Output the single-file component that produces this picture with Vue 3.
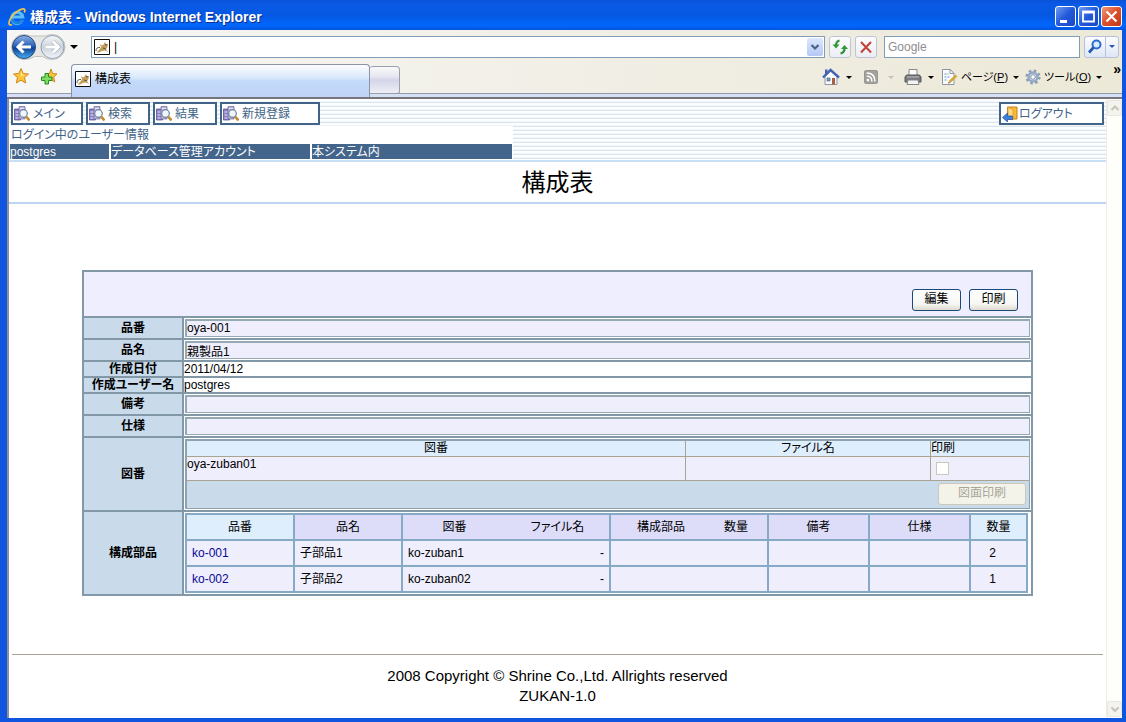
<script setup>
import { ref } from 'vue'

const navItems = [
  { label: 'メイン', size: 'w-main' },
  { label: '検索', size: 'w-short' },
  { label: '結果', size: 'w-short' },
  { label: '新規登録', size: 'w-long' }
]

const address = ref('|')
const query = ref('')

const parts = [
  { no: 'ko-001', name: '子部品1', drawing: 'ko-zuban1', file: '-', qty: 2 },
  { no: 'ko-002', name: '子部品2', drawing: 'ko-zuban02', file: '-', qty: 1 }
]
</script>

<template>
  <div class="window">
    <header class="titlebar">
      <svg class="ie" viewBox="0 0 18 18" width="18" height="18" aria-hidden="true">
        <path d="M14.4 12.200A5.600 5.600 0 1 1 14.800 9H5" fill="none" stroke="#5cc0f8" stroke-width="3" />
        <path d="M14.400 12.200A5.600 5.600 0 0 1 4.200 10.800" fill="none" stroke="#1c82dc" stroke-width="2.600" />
        <path d="M4 16.6C.8 18 .1 15.200 2.200 11.200 5 5.800 11 1.300 15 .9c2.400-.1 2.200 1.800 1.200 3.600" fill="none" stroke="#f1c24a" stroke-width="1.700" />
      </svg>
      <h1>構成表 - Windows Internet Explorer</h1>
      <div class="controls">
        <button class="ctl" type="button" aria-label="最小化">
          <svg viewBox="0 0 20 20" width="20" height="20"><path d="M4 13h7v3H4z" fill="#fff" /></svg>
        </button>
        <button class="ctl" type="button" aria-label="最大化">
          <svg viewBox="0 0 20 20" width="20" height="20"><path d="M4 4.500h11v10H4zM4 5.500h11" fill="none" stroke="#fff" stroke-width="1.800" /></svg>
        </button>
        <button class="ctl close" type="button" aria-label="閉じる">
          <svg viewBox="0 0 20 20" width="20" height="20"><path d="M4.500 4.500l10 10M14.500 4.500l-10 10" stroke="#fff" stroke-width="2.200" /></svg>
        </button>
      </div>
    </header>

    <div class="frame">
      <div class="toolbar">
        <div class="row address-row">
          <svg class="travel" viewBox="0 0 60 28" width="60" height="28" aria-hidden="true">
            <defs>
              <linearGradient id="backFill" x1="0" y1="0" x2="0" y2="1">
                <stop offset="0" stop-color="#8fb4e4" /><stop offset=".45" stop-color="#2b62b8" />
                <stop offset=".55" stop-color="#0e3f96" /><stop offset="1" stop-color="#49b0ee" />
              </linearGradient>
              <linearGradient id="fwdFill" x1="0" y1="0" x2="0" y2="1">
                <stop offset="0" stop-color="#f6f7f9" /><stop offset=".5" stop-color="#ccd3dc" />
                <stop offset="1" stop-color="#f2f5f8" />
              </linearGradient>
            </defs>
            <path d="M14 1.500q3 0 6 1.500h16q3-1.500 6.500-1.500a12.500 12.500 0 0 1 0 25q-6 0-10-3h-8q-4 3-10.500 3a12.500 12.500 0 0 1 0-25z" fill="#e6e6e4" stroke="#c2c2be" />
            <circle cx="14" cy="14" r="11.500" fill="url(#backFill)" stroke="#274a86" />
            <circle cx="42.500" cy="14" r="11.500" fill="url(#fwdFill)" stroke="#8fa0b4" />
            <path d="M21 14H9M13.500 8.500L8 14l5.500 5.500" fill="none" stroke="#fff" stroke-width="3" />
            <path d="M35.500 14h12M43 8.500l5.500 5.500-5.500 5.500" fill="none" stroke="#aab4c0" stroke-width="4.200" />
            <path d="M35.500 14h12M43 8.500l5.500 5.500-5.500 5.500" fill="none" stroke="#fff" stroke-width="2.800" />
          </svg>
          <span class="tri history"></span>
          <div class="address">
            <svg class="page-icon" viewBox="0 0 16 16" width="16" height="16" aria-hidden="true">
              <path d="M.5.5h15v15H.5z" fill="#fff" stroke="#111" />
              <path d="M6 5l2 1.500 1.500-1L11 3l1 2h2l-.5 3-1.500 2 2 3-3-1.500-3 .5L5 13.500H2.500L5 11l2-2.500z" fill="#c3a05a" />
              <path d="M2 12q0-4 4-3.500M9 9l3 1M11 5.500l2 .5" fill="none" stroke="#5d5648" />
            </svg>
            <input v-model="address" type="text" aria-label="アドレス" />
            <button type="button" class="combo" aria-label="履歴">
              <svg viewBox="0 0 16 18" width="16" height="18"><path d="M4.500 7L8 10.500 11.500 7" fill="none" stroke="#4d6185" stroke-width="2.200" /></svg>
            </button>
          </div>
          <button class="tool-btn" type="button" aria-label="更新">
            <svg viewBox="0 0 20 20" width="20" height="20">
              <path d="M9.500 3.500Q6 4.500 6 8.500M10.500 16.500q4-1 4-5" fill="none" stroke="#2f8f36" stroke-width="2.200" />
              <path d="M2.500 7.500h7L6 11.500zM11 12h7l-3.500-4z" fill="#2f9a38" />
            </svg>
          </button>
          <button class="tool-btn" type="button" aria-label="中止">
            <svg viewBox="0 0 20 20" width="20" height="20"><path d="M5 5l10 10.500M15 5L5 15.500" stroke="#c4403a" stroke-width="2" /></svg>
          </button>
          <input v-model="query" class="search" type="text" placeholder="Google" aria-label="検索" />
          <div class="search-group">
            <button type="button" aria-label="検索する">
              <svg viewBox="0 0 20 20" width="20" height="20">
                <circle cx="11.500" cy="7.500" r="4" fill="#d9ecff" stroke="#2a6ad0" stroke-width="2" />
                <path d="M8.500 10.500L4 15.500" stroke="#2458b0" stroke-width="2.800" />
              </svg>
            </button>
            <button type="button" class="more" aria-label="検索オプション"><span class="tri blue"></span></button>
          </div>
        </div>

        <div class="row tab-row">
          <svg class="star" viewBox="0 0 18 18" width="18" height="18" aria-hidden="true">
            <path d="M9 1.500l2.200 5 5.300.5-4 3.600 1.200 5.400L9 13.200 4.300 16l1.200-5.400-4-3.600 5.300-.5z" fill="#fbc63c" stroke="#d1861c" stroke-linejoin="round" />
            <path d="M9 4l1.300 3.500 3 .4-4.300.9z" fill="#fff0a8" />
          </svg>
          <svg class="star-add" viewBox="0 0 18 18" width="18" height="18" aria-hidden="true">
            <path d="M11 1l1.600 4.600 4.400.4-3.300 3.100 1.100 4.900-3.800-2.400L7 14l1-5-3-3 4.400-.4z" fill="#fbc63c" stroke="#d1861c" stroke-linejoin="round" />
            <path d="M5 5.500h3.500V9H12v3.500H8.500V16H5v-3.500H1.500V9H5z" fill="#7fdc62" stroke="#248a22" />
          </svg>
          <div class="tab">
            <svg class="page-icon" viewBox="0 0 16 16" width="16" height="16" aria-hidden="true">
              <path d="M.5.5h15v15H.5z" fill="#fff" stroke="#111" />
              <path d="M6 5l2 1.500 1.500-1L11 3l1 2h2l-.5 3-1.500 2 2 3-3-1.500-3 .5L5 13.500H2.500L5 11l2-2.500z" fill="#c3a05a" />
              <path d="M2 12q0-4 4-3.500M9 9l3 1M11 5.500l2 .5" fill="none" stroke="#5d5648" />
            </svg>
            <span>構成表</span>
          </div>
          <button class="new-tab" type="button" aria-label="新しいタブ"></button>
          <div class="commands">
            <svg viewBox="0 0 18 18" width="18" height="18" aria-hidden="true">
              <path d="M3 1.500h2.500V6H3z" fill="#4a5fae" />
              <path d="M3 8.500L9 3l6 5.500V16.500H3z" fill="#fafafa" stroke="#8d93a8" />
              <path d="M1 9.500L8.500 2 17 9.500" fill="none" stroke="#4564b4" stroke-width="2.400" />
              <path d="M5 10h3v3H5z" fill="#6fa3dc" stroke="#456" stroke-width=".6" /><path d="M10 10h3v6.500h-3z" fill="#a5603f" />
            </svg>
            <span class="tri small home-arrow"></span>
            <svg class="feed" viewBox="0 0 16 16" width="14" height="14" aria-hidden="true">
              <rect x=".5" y=".5" width="15" height="15" rx="2" fill="#a3a19b" stroke="#8d8b86" />
              <circle cx="4.500" cy="11.500" r="1.500" fill="#fff" />
              <path d="M3 7q6 0 6 6M3 3.500q9.500 0 9.500 9.500" fill="none" stroke="#fff" stroke-width="1.700" />
            </svg>
            <span class="tri small pale"></span>
            <svg class="printer" viewBox="0 0 18 18" width="18" height="18" aria-hidden="true">
              <path d="M5 1.500h8v6H5z" fill="#fff" stroke="#888" />
              <path d="M2.500 7h13l1.500 2v5H1V9z" fill="#77797d" stroke="#55575b" />
              <path d="M3 9h12" stroke="#c4c7cc" /><path d="M4 12h10l1 4.500H3z" fill="#f4f4f4" stroke="#888" />
            </svg>
            <span class="tri small"></span>
            <svg class="page" viewBox="0 0 18 18" width="18" height="18" aria-hidden="true">
              <path d="M2.500 1.500h8l3.500 4v11H2.500z" fill="#fcfcfc" stroke="#8f959f" />
              <path d="M10 1.500v4h4" fill="none" stroke="#8f959f" />
              <path d="M4.500 6h4M4.500 9h5M4.500 12h3" stroke="#5f93d6" stroke-dasharray="2 1" />
              <path d="M16.500 7.500L9.500 14" stroke="#d9a431" stroke-width="2.400" /><path d="M8 15.500l2-.5-1.300-1.300z" fill="#444" />
            </svg>
            <span class="cmd">ページ(<u>P</u>)</span>
            <span class="tri small"></span>
            <svg class="gear" viewBox="0 0 18 18" width="16" height="16" aria-hidden="true">
              <circle cx="9" cy="9" r="7.200" fill="none" stroke="#8a9bb3" stroke-width="2.600" stroke-dasharray="2.827 2.827" />
              <circle cx="9" cy="9" r="5" fill="#dfe9f5" stroke="#93a8c4" stroke-width="2.800" />
              <circle cx="9" cy="9" r="2.600" fill="#fff" stroke="#73869f" />
            </svg>
            <span class="cmd">ツール(<u>O</u>)</span>
            <span class="tri small"></span>
            <span class="overflow">»</span>
          </div>
        </div>
      </div>

      <div class="viewport">
        <main class="page-body">
          <div class="banner">
            <nav class="menu">
              <button v-for="item in navItems" :key="item.label" type="button" class="menu-btn" :class="item.size">
                <svg viewBox="0 0 16 16" width="16" height="16" aria-hidden="true">
                  <path d="M.5 3h5l1 1v10h-6z" fill="#8a7fc4" stroke="#4b4586" stroke-width=".7" />
                  <path d="M5 .5h6V13H5z" fill="#b9b4e0" stroke="#6a6797" stroke-width=".7" />
                  <path d="M1.500 6h3M1.500 9h3M1.500 12h3M6 2.500h4" stroke="#e6e3fb" />
                  <circle cx="9.500" cy="7.500" r="3.800" fill="#eef6fd" stroke="#6e7f99" stroke-width="1.200" />
                  <path d="M12 10.500l3.500 4" stroke="#c28a2b" stroke-width="2.600" />
                </svg>
                <span>{{ item.label }}</span>
              </button>
              <button type="button" class="menu-btn logout">
                <svg viewBox="0 0 16 16" width="16" height="16" aria-hidden="true">
                  <path d="M5.500 1h9.500v12H5.500z" fill="#f9b93a" stroke="#c98315" />
                  <path d="M6 1.500l5 2V14l-5-2z" fill="#ffdc84" stroke="#d49228" stroke-width=".7" />
                  <path d="M.5 11.500l5-4.500v3h5v3.500h-5V16z" fill="#3f7fe0" stroke="#1f519f" stroke-width=".7" />
                </svg>
                <span>ログアウト</span>
              </button>
            </nav>
            <section class="login-info">
              <p>ログイン中のユーザー情報</p>
              <div class="login-cells">
                <span>postgres</span><span>データベース管理アカウント</span><span>本システム内</span>
              </div>
            </section>
          </div>

          <h2>構成表</h2>

          <table class="sheet">
            <colgroup><col class="label-col" /><col /></colgroup>
            <tbody>
              <tr>
                <td colspan="2" class="actions">
                  <div><button type="button" class="xp-btn">編集</button><button type="button" class="xp-btn">印刷</button></div>
                </td>
              </tr>
              <tr class="field"><th scope="row"><label for="no">品番</label></th><td><input id="no" value="oya-001" readonly /></td></tr>
              <tr class="field"><th scope="row"><label for="name">品名</label></th><td><input id="name" value="親製品1" readonly /></td></tr>
              <tr class="plain"><th scope="row">作成日付</th><td>2011/04/12</td></tr>
              <tr class="plain"><th scope="row">作成ユーザー名</th><td>postgres</td></tr>
              <tr class="field"><th scope="row"><label for="note">備考</label></th><td><input id="note" readonly /></td></tr>
              <tr class="field"><th scope="row"><label for="spec">仕様</label></th><td><input id="spec" readonly /></td></tr>
              <tr>
                <th scope="row">図番</th>
                <td class="holder">
                  <table class="drawings">
                    <colgroup><col /><col class="file-col" /><col class="print-col" /></colgroup>
                    <thead><tr><th scope="col">図番</th><th scope="col">ファイル名</th><th scope="col" class="left">印刷</th></tr></thead>
                    <tbody><tr><td>oya-zuban01</td><td></td><td class="check"><input type="checkbox" disabled aria-label="印刷" /></td></tr></tbody>
                    <tfoot><tr><td colspan="3"><button type="button" class="xp-btn wide" disabled>図面印刷</button></td></tr></tfoot>
                  </table>
                </td>
              </tr>
              <tr>
                <th scope="row">構成部品</th>
                <td class="holder">
                  <table class="parts">
                    <colgroup>
                      <col class="c-id" /><col class="c-id" /><col class="c-drawing" /><col class="c-part" />
                      <col class="c-note" /><col class="c-note" /><col class="c-qty" />
                    </colgroup>
                    <thead>
                      <tr>
                        <th scope="col" class="key">品番</th>
                        <th scope="col">品名</th>
                        <th scope="col"><div class="pair"><span>図番</span><span>ファイル名</span></div></th>
                        <th scope="col"><div class="pair uneven"><span>構成部品</span><span>数量</span></div></th>
                        <th scope="col">備考</th>
                        <th scope="col">仕様</th>
                        <th scope="col" class="key">数量</th>
                      </tr>
                    </thead>
                    <tbody>
                      <tr v-for="p in parts" :key="p.no">
                        <td><a href="#">{{ p.no }}</a></td>
                        <td>{{ p.name }}</td>
                        <td><div class="spread"><span>{{ p.drawing }}</span><span>{{ p.file }}</span></div></td>
                        <td></td><td></td><td></td>
                        <td class="qty">{{ p.qty }}</td>
                      </tr>
                    </tbody>
                  </table>
                </td>
              </tr>
            </tbody>
          </table>

          <footer>
            <p>2008 Copyright © Shrine Co.,Ltd. Allrights reserved</p>
            <p>ZUKAN-1.0</p>
          </footer>
        </main>

        <div class="scrollbar">
          <button type="button" disabled aria-label="上へ">
            <svg viewBox="0 0 14 14" width="14" height="14"><path d="M3.500 9L7 5.500 10.500 9" fill="none" stroke="#c4c4bc" stroke-width="2" /></svg>
          </button>
          <button type="button" disabled aria-label="下へ">
            <svg viewBox="0 0 14 14" width="14" height="14"><path d="M3.500 5.500L7 9l3.500-3.500" fill="none" stroke="#c4c4bc" stroke-width="2" /></svg>
          </button>
        </div>
      </div>
    </div>
  </div>
</template>

<style>
body {
  margin: 0;
}
</style>

<style scoped>
* {
  box-sizing: border-box;
}
button,
input {
  font: inherit;
  color: inherit;
  margin: 0;
  padding: 0;
}
button {
  border: 0;
  background: none;
}
svg {
  display: block;
  flex: none;
}
p,
h1,
h2 {
  margin: 0;
}

.window {
  min-height: 100vh;
  display: flex;
  flex-direction: column;
  background: #1055e0;
  font: 12px/14px "Liberation Sans", "Noto Sans CJK JP", sans-serif;
  font-feature-settings: "palt";
  color: #000;
}

/* title bar */
.titlebar {
  height: 30px;
  flex: none;
  display: flex;
  align-items: center;
  padding: 3px 4px 0 8px;
  background: linear-gradient(#0a52d8, #0a5ae6 15%, #0558e2 50%, #0066fc 85%, #0454dc);
}
.titlebar h1 {
  flex: 1;
  margin-left: 4px;
  font-size: 14px;
  line-height: 18px;
  font-weight: bold;
  color: #fff;
  text-shadow: 1px 1px 0 #0a2f8c;
}
.controls {
  display: flex;
  gap: 2px;
}
.ctl {
  width: 21px;
  height: 21px;
  border: 1px solid #fff;
  border-radius: 3px;
  background: linear-gradient(135deg, #6f9cf2, #2259da 50%, #1a48c4);
  overflow: hidden;
}
.ctl.close {
  background: linear-gradient(135deg, #f0977c, #dc4f2a 50%, #c0371a);
}

/* tool bars */
.frame {
  flex: 1;
  display: flex;
  flex-direction: column;
  margin: 0 4px 4px 7px;
}
.toolbar {
  background: linear-gradient(90deg, #f6f6f5, #f1efe6 50%, #ece9d8);
}
.row {
  display: flex;
}
.address-row {
  height: 33px;
  align-items: center;
  padding: 0 3px;
}
.tri {
  flex: none;
  width: 0;
  height: 0;
  border: 4px solid transparent;
  border-top-color: #000;
  border-bottom: 0;
}
.tri.small {
  border-width: 3px 3px 0;
}
.tri.pale {
  border-top-color: #c5c2b6;
}
.tri.blue {
  border-width: 3px 3px 0;
  border-top-color: #2458b0;
}
.history {
  margin-right: 13px;
}
.address {
  flex: 1;
  height: 22px;
  display: flex;
  align-items: center;
  gap: 4px;
  padding: 0 1px 0 2px;
  border: 1px solid #7f9db9;
  background: #fff;
}
.address input {
  flex: 1;
  min-width: 0;
  border: 0;
  outline: 0;
  background: none;
}
.combo {
  width: 16px;
  height: 18px;
  border-radius: 2px;
  background: linear-gradient(#dce7fd, #b4c8f6);
}
.tool-btn {
  width: 22px;
  height: 22px;
  margin-left: 4px;
  border: 1px solid #bdc5d6;
  border-radius: 3px;
  background: linear-gradient(#fcfcfd, #eceef4);
}
.search {
  width: 196px;
  height: 22px;
  margin: 0 4px 0 7px;
  padding: 0 3px;
  border: 1px solid #7f9db9;
  background: #fff;
}
.search::placeholder {
  color: #8e8e8e;
  opacity: 1;
}
.search-group {
  display: flex;
  width: 35px;
  height: 22px;
  border: 1px solid #b6c2da;
  border-radius: 3px;
  background: linear-gradient(#fcfcfe, #dfe7f6);
}
.more {
  flex: 1;
  display: flex;
  align-items: center;
  justify-content: center;
  border-left: 1px solid #b6c2da;
}
.tab-row {
  height: 36px;
  align-items: flex-start;
  padding-left: 5px;
  border-bottom: 2px solid #77757a;
  background: linear-gradient(transparent 30px, #9199aa 30px, #9199aa 31px, #d5dff6 31px);
}
.star {
  margin-top: 4px;
}
.star-add {
  margin: 5px 0 0 10px;
}
.tab {
  width: 299px;
  height: 33px;
  margin: 1px 0 0 13px;
  display: flex;
  align-items: flex-start;
  gap: 4px;
  padding: 6px 3px 0;
  border: 1px solid #8b93a5;
  border-bottom: 0;
  border-radius: 4px 4px 0 0;
  background: linear-gradient(#fcfdff, #d9e8fb 40%, #c3dafa 50%, #bfd3f8);
}
.tab span {
  line-height: 16px;
}
.new-tab {
  width: 30px;
  height: 28px;
  margin-top: 3px;
  border: 1px solid #9a9fae;
  border-left: 0;
  border-radius: 3px 4px 3px 0;
  background: linear-gradient(#fafafb, #e3e4ef 40%, #d3d5e8 50%, #eeeef6);
}
.commands {
  flex: 1;
  display: flex;
  align-items: center;
  justify-content: flex-end;
  height: 28px;
  font-size: 11px;
  white-space: nowrap;
}
.commands .tri {
  margin-left: 5px;
}
.commands .home-arrow {
  margin-left: 6px;
}
.feed {
  margin-left: 12px;
}
.commands .pale {
  margin-left: 10px;
}
.printer {
  margin-left: 10px;
}
.commands .printer + .tri {
  margin-left: 6px;
}
.page {
  margin-left: 6px;
}
.cmd {
  margin-left: 3px;
}
.gear {
  margin-left: 6px;
}
.overflow {
  align-self: flex-start;
  margin: 0 1px 0 11px;
  font-size: 14px;
  line-height: 12px;
  font-weight: bold;
}

/* page */
.viewport {
  flex: 1;
  display: flex;
  background: #fff;
  border-left: 2px solid #8f8f96;
}
.page-body {
  flex: 1;
  min-width: 0;
}
.banner {
  padding: 3px 0 1px;
  background: repeating-linear-gradient(#fbfdfe 0 2px, #f1f7fa 2px 3px, #d9e5ec 3px 4px);
}
.menu {
  display: flex;
  gap: 3px;
  padding: 0 2px;
  color: #426488;
}
.menu-btn {
  height: 23px;
  display: flex;
  align-items: center;
  gap: 3px;
  padding: 0 1px;
  border: 2px solid #426488;
  background: #fff;
  white-space: nowrap;
}
.w-main {
  width: 72px;
}
.w-short {
  width: 64px;
}
.w-long {
  width: 100px;
}
.logout {
  width: 105px;
  margin-left: auto;
  gap: 1px;
}
.login-info {
  width: 504px;
  margin-top: 1px;
  padding: 1px 1px 0;
  background: #fff;
  color: #426488;
}
.login-info p {
  line-height: 17px;
  padding-left: 1px;
}
.login-cells {
  display: grid;
  grid-template-columns: 99px 199px 200px;
  gap: 2px;
}
.login-cells span {
  height: 15px;
  line-height: 16px;
  background: #44658b;
  color: #fff;
  white-space: nowrap;
}
h2 {
  height: 44px;
  border-top: 2px solid #c9dff4;
  border-bottom: 2px solid #bdd6f0;
  font-size: 24px;
  line-height: 42px;
  font-weight: normal;
  text-align: center;
}

.sheet {
  width: calc(100% - 146px);
  margin: 66px auto 0;
  table-layout: fixed;
  border-spacing: 2px;
  background: #8398a6;
}
.sheet td,
.sheet th {
  padding: 0;
}
.label-col {
  width: 98px;
}
.sheet th {
  background: #c9dbea;
}
.sheet > tbody > tr > td {
  background: #fff;
}
.sheet > tbody > tr > td.actions {
  height: 44px;
  background: #eeeefe;
}
.actions div {
  display: flex;
  justify-content: flex-end;
  gap: 8px;
  padding: 12px 13px 0 0;
}
.xp-btn {
  width: 49px;
  height: 22px;
  padding-bottom: 3px;
  border: 1px solid #1c4a78;
  border-radius: 3px;
  background: linear-gradient(#fff, #f6f6f3 70%, #dedbd0);
  line-height: 14px;
  white-space: nowrap;
}
.field td {
  height: 20px;
}
.field input {
  display: block;
  width: calc(100% - 2px);
  height: 18px;
  margin: 1px;
  padding-bottom: 1px;
  border: solid #95a9b3;
  border-width: 2px 1px 1px 2px;
  background: #eeeefc;
  outline: 0;
}
.plain td,
.plain th {
  height: 14px;
  line-height: 14px;
}
.holder {
  vertical-align: top;
}

/* drawings */
.drawings {
  width: calc(100% - 2px);
  margin: 1px;
  table-layout: fixed;
  border-spacing: 0;
  border: solid #8fa3af;
  border-width: 2px 1px 1px 2px;
}
.file-col {
  width: 245px;
}
.print-col {
  width: 99px;
}
.drawings th {
  height: 16px;
  line-height: 15px;
  border-bottom: 1px solid #aaa38f;
  font-weight: normal;
  background: #deeefd;
}
.drawings .left {
  text-align: left;
}
.drawings th + th,
.drawings td + td {
  border-left: 1px solid #aaa38f;
}
.drawings tbody td {
  height: 24px;
  vertical-align: top;
  background: #eeeefc;
  border-bottom: 1px solid #aaa38f;
}
.drawings .check {
  padding: 5px 0 0 5px;
}
.check input {
  display: block;
  appearance: none;
  width: 13px;
  height: 13px;
  border: 1px solid #cac8bb;
  background: #fff;
}
.drawings tfoot td {
  height: 27px;
  background: #c9dbea;
}
.xp-btn.wide {
  display: block;
  width: 88px;
  margin: 0 3px 1px auto;
  border-color: #cac8bb;
  background: #f4f3ea;
  color: #a6a599;
}

/* parts */
.parts {
  width: calc(100% - 4px);
  margin: 1px 3px 1px 1px;
  table-layout: fixed;
  border-spacing: 2px;
  background: #86a9c6;
}
.c-id {
  width: 106px;
}
.c-drawing {
  width: 206px;
}
.c-part {
  width: 156px;
}
.c-qty {
  width: 55px;
}
.parts th {
  height: 24px;
  font-weight: normal;
  background: #ddddfa;
}
.parts th.key {
  background: #deeefd;
}
.parts td {
  height: 24px;
  padding: 0 5px;
  background: #eeeefc;
}
.parts a {
  color: #0a0a96;
  text-decoration: none;
}
.parts td.qty {
  padding: 0 12px 0 0;
  text-align: center;
}
.pair {
  display: grid;
  grid-template-columns: 1fr 1fr;
}
.pair.uneven {
  grid-template-columns: 2fr 1fr;
  padding-right: 6px;
}
.spread {
  display: flex;
  justify-content: space-between;
}

footer {
  margin: 58px 3px 0;
  padding-top: 11px;
  border-top: 1px solid #aaa593;
  font-size: 15px;
  line-height: 20px;
  text-align: center;
}

.scrollbar {
  flex: none;
  width: 16px;
  display: flex;
  flex-direction: column;
  justify-content: space-between;
  padding: 1px 0;
  border-left: 1px solid #eeede6;
  background: #fefefb;
}
.scrollbar button {
  width: 15px;
  height: 16px;
  border: 1px solid #e8e7df;
  border-radius: 2px;
  background: #f4f3ee;
}
</style>
